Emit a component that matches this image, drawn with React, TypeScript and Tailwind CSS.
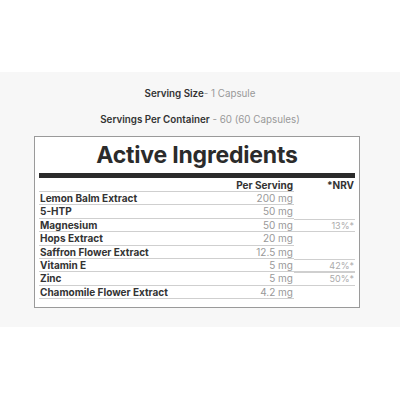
const rows: [string, string, string][] = [
  ["Lemon Balm Extract", "200 mg", ""],
  ["5-HTP", "50 mg", ""],
  ["Magnesium", "50 mg", "13%*"],
  ["Hops Extract", "20 mg", ""],
  ["Saffron Flower Extract", "12.5 mg", ""],
  ["Vitamin E", "5 mg", "42%*"],
  ["Zinc", "5 mg", "50%*"],
  ["Chamomile Flower Extract", "4.2 mg", ""],
];

export default function App() {
  return (
    <div className="h-[400px] overflow-hidden bg-white pt-[72px] font-['Inter',sans-serif]">
      <div className="h-[255px] bg-[#f7f7f7] pt-[15px]">
        {/* Serving info */}
        <p className="text-center text-[9.8px] leading-[14px] text-[#999]">
          <span className="font-semibold text-[#333]">Serving Size</span>- 1 Capsule
        </p>
        <p className="mt-[12px] text-center text-[9.8px] leading-[14px] text-[#999]">
          <span className="font-semibold text-[#333]">Servings Per Container</span> - 60 (60 Capsules)
        </p>

        {/* Facts box */}
        <div className="mt-[9px] ml-[34px] w-[326px] border border-[#9a9a9a] bg-white px-[4px] pb-[8px]">
          <h2 className="h-[36px] text-center text-[23px] font-bold leading-[36px] tracking-[-0.2px] text-[#2b2b2b]">
            Active Ingredients
          </h2>
          <div className="h-[5px] bg-[#2b2b2b]" />
          <div className="grid grid-cols-[1fr_81px_61px] text-[10px]">
            <div className="h-[14px] border-b border-[#cfcfcf]" />
            <div className="h-[14px] border-b border-[#cfcfcf] pr-[1px] text-right font-bold leading-[14px] text-[#333]">
              Per Serving
            </div>
            <div className="h-[14px] pr-[1px] text-right font-bold leading-[14px] text-[#333]">*NRV</div>
            {rows.map(([name, amount, nrv]) => (
              <div key={name} className="contents">
                <div className="h-[13.4px] border-b border-[#cfcfcf] pl-[1px] font-bold leading-[13px] text-[#333]">
                  {name}
                </div>
                <div className="h-[13.4px] border-b border-[#cfcfcf] pr-[1px] text-right leading-[13px] text-[#999]">
                  {amount}
                </div>
                <div
                  className={
                    nrv
                      ? "h-[13.4px] border-y border-[#cfcfcf] pr-[1px] text-right text-[9px] leading-[12px] text-[#aaa]"
                      : "h-[13.4px]"
                  }
                >
                  {nrv}
                </div>
              </div>
            ))}
          </div>
        </div>
      </div>
    </div>
  );
}
